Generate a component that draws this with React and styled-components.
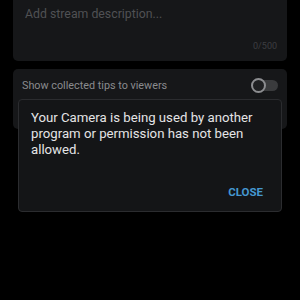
import React from "react";
import styled, { createGlobalStyle } from "styled-components";

const GlobalStyle = createGlobalStyle`
  html, body {
    margin: 0;
    padding: 0;
    background: #000;
    font-family: Roboto, "Liberation Sans", sans-serif;
  }
`;

const Screen = styled.div`
  position: relative;
  width: 300px;
  height: 300px;
  overflow: hidden;
  background: #000;
`;

const Form = styled.div`
  display: flex;
  flex-direction: column;
  gap: 8px;
  padding: 0 13px;
  margin-top: -10px;
`;

const Card = styled.div`
  background: #161719;
  border-radius: 5px;
  height: ${(p) => p.height}px;
  box-sizing: border-box;
`;

const DescriptionCard = styled(Card)`
  display: flex;
  flex-direction: column;
  justify-content: space-between;
  padding: 17px 10px 10px 12px;
`;

const Placeholder = styled.div`
  color: #505154;
  font-size: 12.3px;
`;

const Counter = styled.div`
  align-self: flex-end;
  color: #3d3e41;
  font-size: 9px;
`;

const ToggleRow = styled(Card)`
  display: flex;
  align-items: flex-start;
  justify-content: space-between;
  padding: 10px 9px 0 9px;
`;

const ToggleLabel = styled.span`
  color: #8a8b8e;
  font-size: 10.8px;
  line-height: 14px;
`;

const Switch = styled.div`
  position: relative;
  width: 23px;
  height: 11px;
  border-radius: 6px;
  background: #3a3b3d;
  margin-top: 1px;
`;

const Knob = styled.div`
  position: absolute;
  left: -4px;
  top: -2px;
  width: 11px;
  height: 11px;
  border-radius: 50%;
  border: 2px solid #8c8d90;
  background: #1f2022;
`;

const Dialog = styled.div`
  position: absolute;
  left: 18px;
  top: 99px;
  width: 264px;
  height: 113px;
  box-sizing: border-box;
  background: #141517;
  border: 1px solid #2b2c2f;
  border-radius: 4px;
  display: flex;
  flex-direction: column;
  justify-content: space-between;
  padding: 10px 18px 12px 12px;
`;

const Message = styled.p`
  margin: 0;
  color: #e4e4e6;
  font-size: 13.2px;
  line-height: 16px;
`;

const CloseButton = styled.button`
  align-self: flex-end;
  background: none;
  border: none;
  padding: 0;
  color: #4597d0;
  font-family: Roboto, "Liberation Sans", sans-serif;
  font-weight: 700;
  font-size: 11.5px;
`;

export default function App() {
  return (
    <Screen>
      <GlobalStyle />
      <Form>
        <DescriptionCard height={71}>
          <Placeholder>Add stream description...</Placeholder>
          <Counter>0/500</Counter>
        </DescriptionCard>
        <ToggleRow height={60}>
          <ToggleLabel>Show collected tips to viewers</ToggleLabel>
          <Switch>
            <Knob />
          </Switch>
        </ToggleRow>
      </Form>
      <Dialog>
        <Message>
          Your Camera is being used by another program or permission has not
          been allowed.
        </Message>
        <CloseButton>CLOSE</CloseButton>
      </Dialog>
    </Screen>
  );
}
